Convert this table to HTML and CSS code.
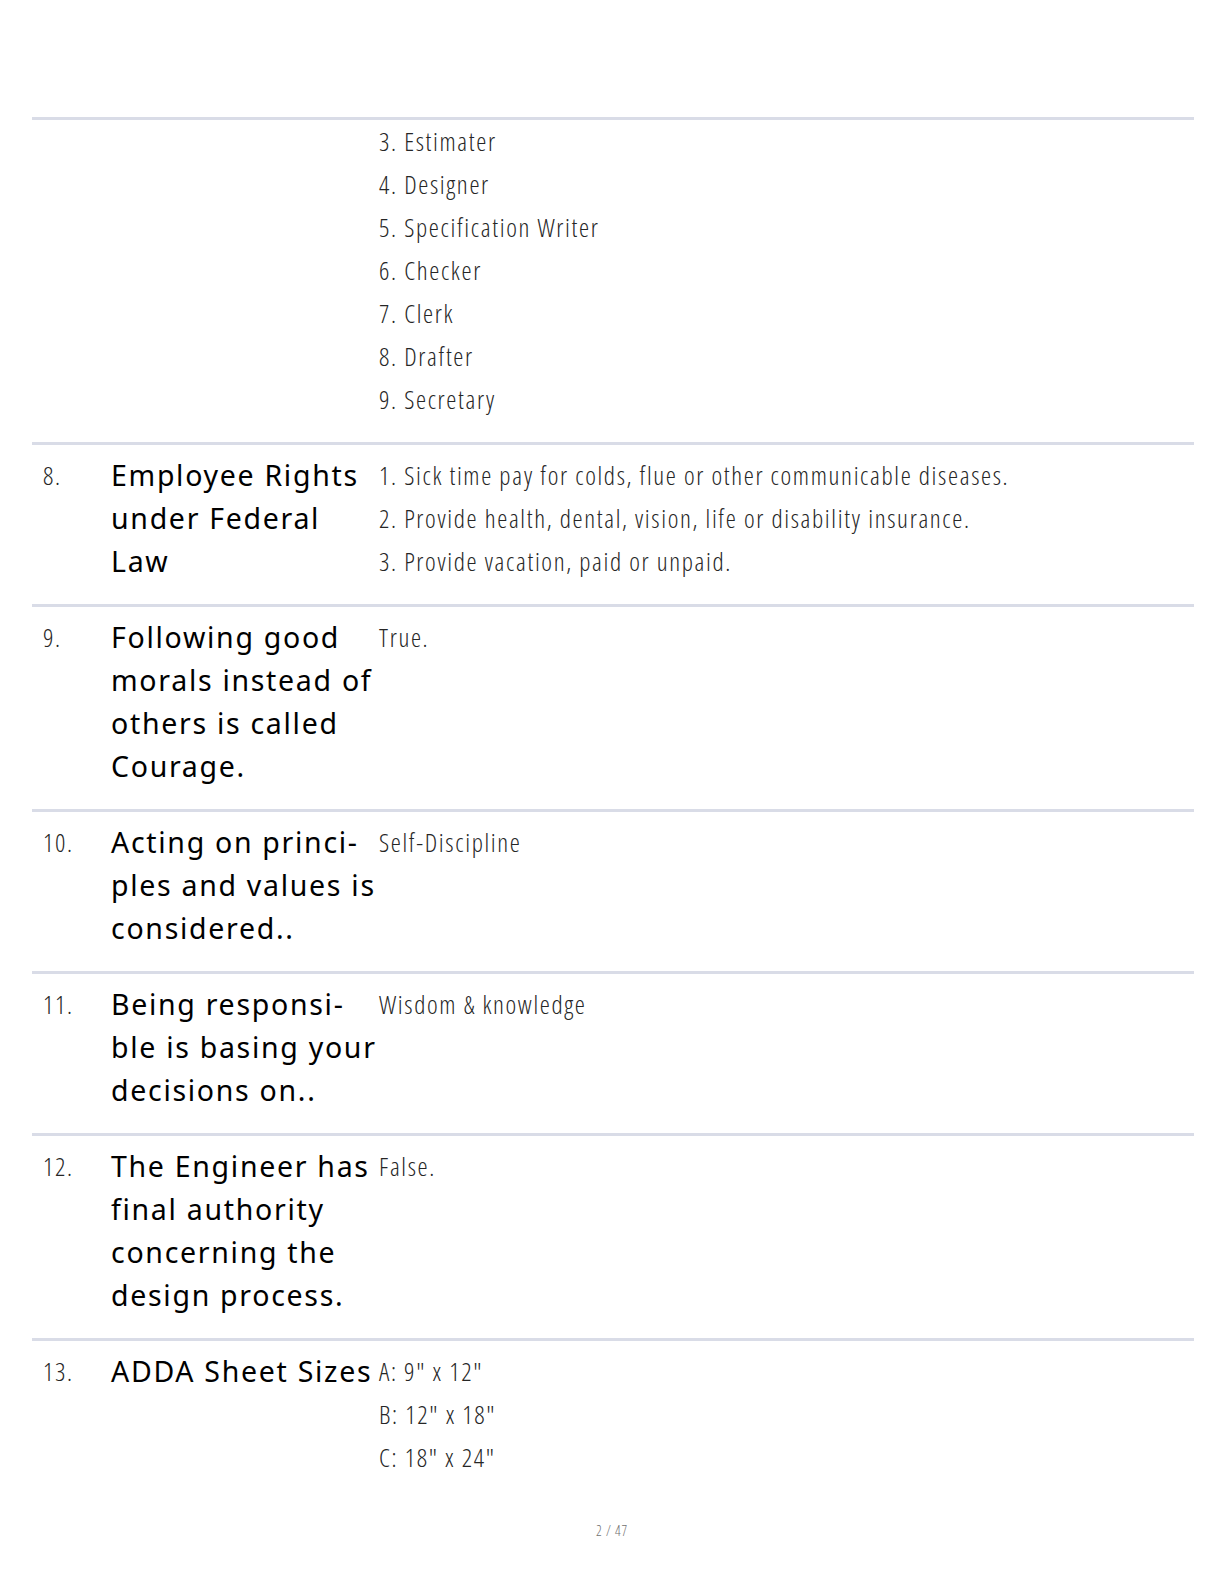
FILE: index.html
```html
<!DOCTYPE html>
<html lang="en">
<head>
<meta charset="utf-8">
<title>Page 2</title>
<link rel="stylesheet" href="styles.css">
</head>
<body>
<div class="page">
  <div class="table">
    <div class="row first">
      <div class="num"></div>
      <div class="q"></div>
      <div class="a">
        <div>3. Estimater</div>
        <div>4. Designer</div>
        <div>5. Specification Writer</div>
        <div>6. Checker</div>
        <div>7. Clerk</div>
        <div>8. Drafter</div>
        <div>9. Secretary</div>
      </div>
    </div>
    <div class="row">
      <div class="num">8.</div>
      <div class="q">Employee Rights under Federal Law</div>
      <div class="a">
        <div>1. Sick time pay for colds, flue or other communicable diseases.</div>
        <div>2. Provide health, dental, vision, life or disability insurance.</div>
        <div>3. Provide vacation, paid or unpaid.</div>
      </div>
    </div>
    <div class="row">
      <div class="num">9.</div>
      <div class="q">Following good morals instead of others is called Courage.</div>
      <div class="a"><div>True.</div></div>
    </div>
    <div class="row">
      <div class="num">10.</div>
      <div class="q">Acting on princi&shy;ples and values is considered..</div>
      <div class="a"><div>Self-Discipline</div></div>
    </div>
    <div class="row">
      <div class="num">11.</div>
      <div class="q">Being responsi&shy;ble is basing your decisions on..</div>
      <div class="a"><div>Wisdom &amp; knowledge</div></div>
    </div>
    <div class="row">
      <div class="num">12.</div>
      <div class="q">The Engineer has final authority concerning the design process.</div>
      <div class="a"><div>False.</div></div>
    </div>
    <div class="row last">
      <div class="num">13.</div>
      <div class="q">ADDA Sheet Sizes</div>
      <div class="a">
        <div>A: 9" x 12"</div>
        <div>B: 12" x 18"</div>
        <div>C: 18" x 24"</div>
      </div>
    </div>
  </div>
  <div class="footer">2 / 47</div>
</div>
</body>
</html>
```

FILE: styles.css
```css
html, body {
  margin: 0;
  padding: 0;
  background: #ffffff;
}

.page {
  width: 1224px;
  height: 1584px;
  box-sizing: border-box;
  padding-top: 117px;
  position: relative;
}

.table {
  margin-left: 32px;
  width: 1162px;
}

.row {
  display: grid;
  grid-template-columns: 68px 268px 1fr;
  border-top: 3px solid #d9dce7;
  padding: 9px 0 21px 11px;
  line-height: 43px;
}

.row.first {
  padding-top: 0;
}

.row.last {
  padding-bottom: 0;
}

.num,
.a {
  font-family: "Open Sans", "Liberation Sans", sans-serif;
  font-weight: 300;
  font-stretch: 75%;
  font-size: 25.5px;
  letter-spacing: 1.65px;
  color: #262626;
}

.q {
  font-family: "Noto Sans", "Open Sans", sans-serif;
  font-size: 28.5px;
  letter-spacing: 1.7px;
  color: #000000;
  hyphens: manual;
}

.footer {
  position: absolute;
  left: 0;
  right: 0;
  top: 1521px;
  text-align: center;
  font-family: "Open Sans", "Liberation Sans", sans-serif;
  font-weight: 300;
  font-stretch: 75%;
  font-size: 14px;
  letter-spacing: 0.8px;
  color: #707070;
}
```
